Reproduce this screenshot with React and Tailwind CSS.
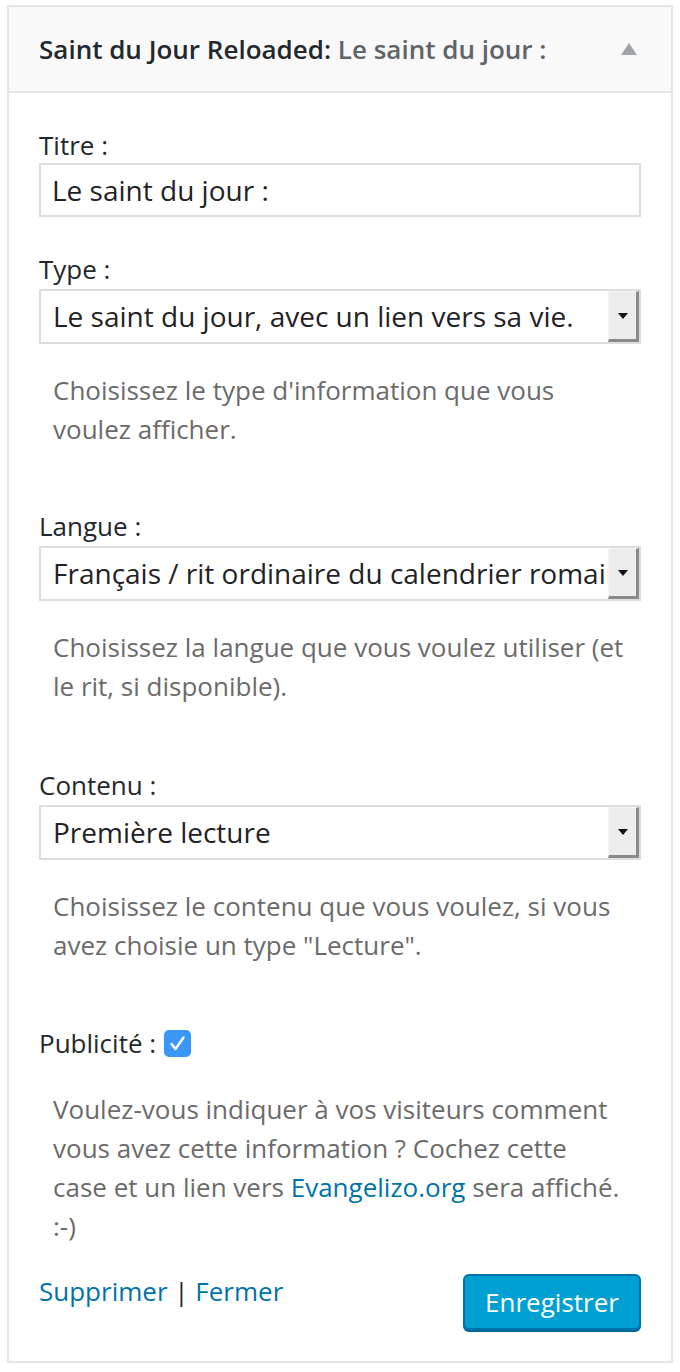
import React from "react";

function SelectBox({ value }) {
  return (
    <div className="relative mt-[2px] flex h-[55px] w-full items-center border-2 border-[#dddddd] bg-white">
      <div className="min-w-0 flex-1 overflow-hidden whitespace-nowrap pl-[12px] pr-[4px] text-[28px] leading-[39px] text-[#1f2326]">
        {value}
      </div>
      <div className="flex h-[51px] w-[31px] shrink-0 items-center justify-center border-b-[3px] border-l border-r-[3px] border-t border-b-[#8a8a8a] border-l-[#f6f6f6] border-r-[#8a8a8a] border-t-[#f6f6f6] bg-[#ececec]">
        <svg width="10" height="6" viewBox="0 0 10 6">
          <path d="M0 0 L10 0 L5 6 Z" fill="#111" />
        </svg>
      </div>
    </div>
  );
}

function Label({ children, className = "" }) {
  return (
    <div className={"text-[26px] leading-[36px] text-[#23282d] " + className}>{children}</div>
  );
}

function Desc({ children, className = "" }) {
  return (
    <p className={"pl-[14px] pr-[15px] text-[26px] leading-[39px] text-[#6b6b6b] " + className}>{children}</p>
  );
}

export default function App() {
  return (
    <div
      className="min-h-[1372px] bg-white pt-[5px]"
      style={{ fontFamily: '"Open Sans", "Noto Sans", sans-serif' }}
    >
      <div className="mx-[7px] w-[666px] border-2 border-[#e5e5e5] bg-white">
        <div className="flex h-[86px] items-center justify-between border-b-2 border-[#e5e5e5] bg-[#f9f9f9] pl-[30px] pr-[34px]">
          <div className="text-[26px] font-semibold leading-[36px] text-[#23282d]">
            <span>Saint du Jour Reloaded:</span>{" "}
            <span className="text-[#606468]">Le saint du jour :</span>
          </div>
          <svg width="16" height="12" viewBox="0 0 16 12">
            <path d="M8 0 L16 12 L0 12 Z" fill="#a0a5aa" />
          </svg>
        </div>

        <div className="px-[30px] pb-[31px] pt-[34px]">
          <Label>Titre :</Label>
          <div className="flex h-[54px] w-full items-center border-2 border-[#dddddd] bg-white pl-[11px] text-[28px] text-[#1f2326]">
            Le saint du jour :
          </div>

          <Label className="mt-[34px]">Type :</Label>
          <SelectBox value="Le saint du jour, avec un lien vers sa vie." />
          <Desc className="mt-[27px]">
            Choisissez le type d'information que vous voulez afficher.
          </Desc>

          <Label className="mt-[59px]">Langue :</Label>
          <SelectBox value="Français / rit ordinaire du calendrier romain" />
          <Desc className="mt-[27px]">
            Choisissez la langue que vous voulez utiliser (et le rit, si disponible).
          </Desc>

          <Label className="mt-[61px]">Contenu :</Label>
          <SelectBox value="Première lecture" />
          <Desc className="mt-[27px]">
            Choisissez le contenu que vous voulez, si vous avez choisie un type "Lecture".
          </Desc>

          <div className="mt-[60px] flex items-center text-[26px] leading-[36px] text-[#23282d]">
            <span>Publicité :</span>
            <span className="ml-[8px] flex h-[27px] w-[27px] items-center justify-center rounded-[5px] bg-[#3a96f7]">
              <svg width="27" height="27" viewBox="0 0 27 27">
                <path d="M7.5 14 L11.5 19 L19.5 7.5" fill="none" stroke="#fff" strokeWidth="2.4" strokeLinecap="round" strokeLinejoin="round" />
              </svg>
            </span>
          </div>
          <Desc className="mt-[29px]">
            Voulez-vous indiquer à vos visiteurs comment vous avez cette information ? Cochez cette case et un lien vers{" "}
            <span className="text-[#0073aa]">Evangelizo.org</span> sera affiché. :-)
          </Desc>

          <div className="mt-[27px] flex items-start justify-between">
            <div className="text-[26px] leading-[36px] text-[#23282d]">
              <span className="text-[#0073aa]">Supprimer</span> |{" "}
              <span className="text-[#0073aa]">Fermer</span>
            </div>
            <button className="mt-[1px] flex h-[56px] w-[178px] items-center justify-center rounded-[6px] border-2 border-[#0073aa] bg-[#00a0d2] text-[26px] text-white shadow-[0_2px_0_#006799]">
              Enregistrer
            </button>
          </div>
        </div>
      </div>
    </div>
  );
}
